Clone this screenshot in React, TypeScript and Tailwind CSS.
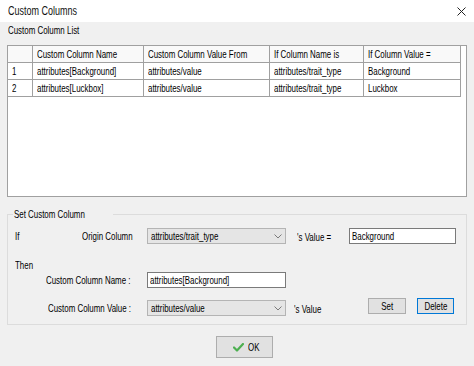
import React from "react";

const T = ({ children, c = "" }: { children: React.ReactNode; c?: string }) => (
  <span className={"inline-block whitespace-nowrap scale-x-[0.72] " + (c || "origin-left")}>{children}</span>
);

const Chevron = () => (
  <svg width="8" height="5" viewBox="0 0 8 5" className="shrink-0">
    <path d="M0.5 0.5 L4 4 L7.5 0.5" fill="none" stroke="#7a7a7a" strokeWidth="1" />
  </svg>
);

const Combo = ({ text }: { text: string }) => (
  <div className="w-[139px] h-[16px] bg-[#e5e5e5] border border-[#b4b4b4] flex items-center justify-between pl-[3px] pr-[3px] overflow-hidden">
    <T>{text}</T>
    <Chevron />
  </div>
);

const TextBox = ({ text, w }: { text: string; w: string }) => (
  <div className={"h-[16px] bg-white border border-[#7a7a7a] flex items-center pl-[2px] overflow-hidden " + w}>
    <T>{text}</T>
  </div>
);

const cols = ["w-[25px]", "w-[111px]", "w-[126px]", "w-[94px]", "w-[97px]"];

const Row = ({ cells, header }: { cells: string[]; header?: boolean }) => (
  <div className={"flex w-[453px] h-[17px] border-b border-[#a0a0a0] " + (header ? "bg-[#f9f9f9]" : "bg-white")}>
    {cells.map((c, i) => (
      <div key={i} className={"border-r border-[#a0a0a0] flex items-center pl-[4px] overflow-hidden " + cols[i]}>
        <T>{c}</T>
      </div>
    ))}
  </div>
);

export default function App() {
  return (
    <div className="w-[474px] h-[366px] bg-[#f0f0f0] flex flex-col text-[11px] leading-[13px] text-black font-['Liberation_Sans',Arial,sans-serif] overflow-hidden">
      <div className="h-[22px] shrink-0 bg-white flex items-center justify-between pl-[8px] pr-[8px]">
        <span className="text-[12px] inline-block whitespace-nowrap origin-left scale-x-[0.75] text-[#111]">Custom Columns</span>
        <svg width="9" height="9" viewBox="0 0 9 9">
          <path d="M0.5 0.5 L8.5 8.5 M8.5 0.5 L0.5 8.5" stroke="#222" strokeWidth="1" />
        </svg>
      </div>

      <div className="h-[23px] shrink-0 pl-[8px] pt-[2px]">
        <T>Custom Column List</T>
      </div>

      <div className="mx-[7px] h-[152px] shrink-0 border border-[#a0a0a0] bg-white">
        <Row header cells={["", "Custom Column Name", "Custom Column Value From", "If Column Name is", "If Column Value ="]} />
        <Row cells={["1", "attributes[Background]", "attributes/value", "attributes/trait_type", "Background"]} />
        <Row cells={["2", "attributes[Luckbox]", "attributes/value", "attributes/trait_type", "Luckbox"]} />
      </div>

      <div className="relative mx-[7px] mt-[17px] h-[111px] shrink-0 border border-[#dcdcdc] pl-[7px]">
        <div className="absolute -top-[7px] left-[5px] px-[1px] bg-[#f0f0f0]">
          <T>Set Custom Column</T>
        </div>

        <div className="flex items-center h-[16px] mt-[13px]">
          <div className="w-[67px]"><T>If</T></div>
          <div className="w-[65px]"><T>Origin Column</T></div>
          <Combo text="attributes/trait_type" />
          <div className="w-[63px] pl-[11px] pt-[2px]"><T>'s Value =</T></div>
          <TextBox text="Background" w="w-[107px]" />
        </div>

        <div className="h-[14px] mt-[14px] flex items-center">
          <T>Then</T>
        </div>

        <div className="flex items-center h-[16px]">
          <div className="w-[132px] pl-[31px]"><T>Custom Column Name :</T></div>
          <TextBox text="attributes[Background]" w="w-[139px]" />
        </div>

        <div className="flex items-start h-[18px] mt-[10px]">
          <div className="w-[132px] pl-[33px] pt-[4px]"><T>Custom Column Value :</T></div>
          <div className="mt-[2px]"><Combo text="attributes/value" /></div>
          <div className="w-[82px] pl-[8px] pt-[5px]"><T>'s Value</T></div>
          <div className="w-[38px] h-[16px] bg-[#e1e1e1] border border-[#adadad] flex items-center justify-center">
            <T c="origin-center">Set</T>
          </div>
          <div className="ml-[11px] w-[37px] h-[16px] bg-[#e1e1e1] border border-[#0078d7] flex items-center justify-center">
            <T c="origin-center">Delete</T>
          </div>
        </div>
      </div>

      <div className="pl-[216px] mt-[11px] shrink-0">
        <div className="w-[57px] h-[22px] bg-[#e1e1e1] border border-[#adadad] flex items-center pl-[16px] gap-[4px]">
          <svg width="11" height="9" viewBox="0 0 11 9" className="shrink-0">
            <path d="M1 4.5 L4 7.5 L10 1" fill="none" stroke="#4caf50" strokeWidth="2.2" strokeLinecap="round" strokeLinejoin="round" />
          </svg>
          <T>OK</T>
        </div>
      </div>
    </div>
  );
}
